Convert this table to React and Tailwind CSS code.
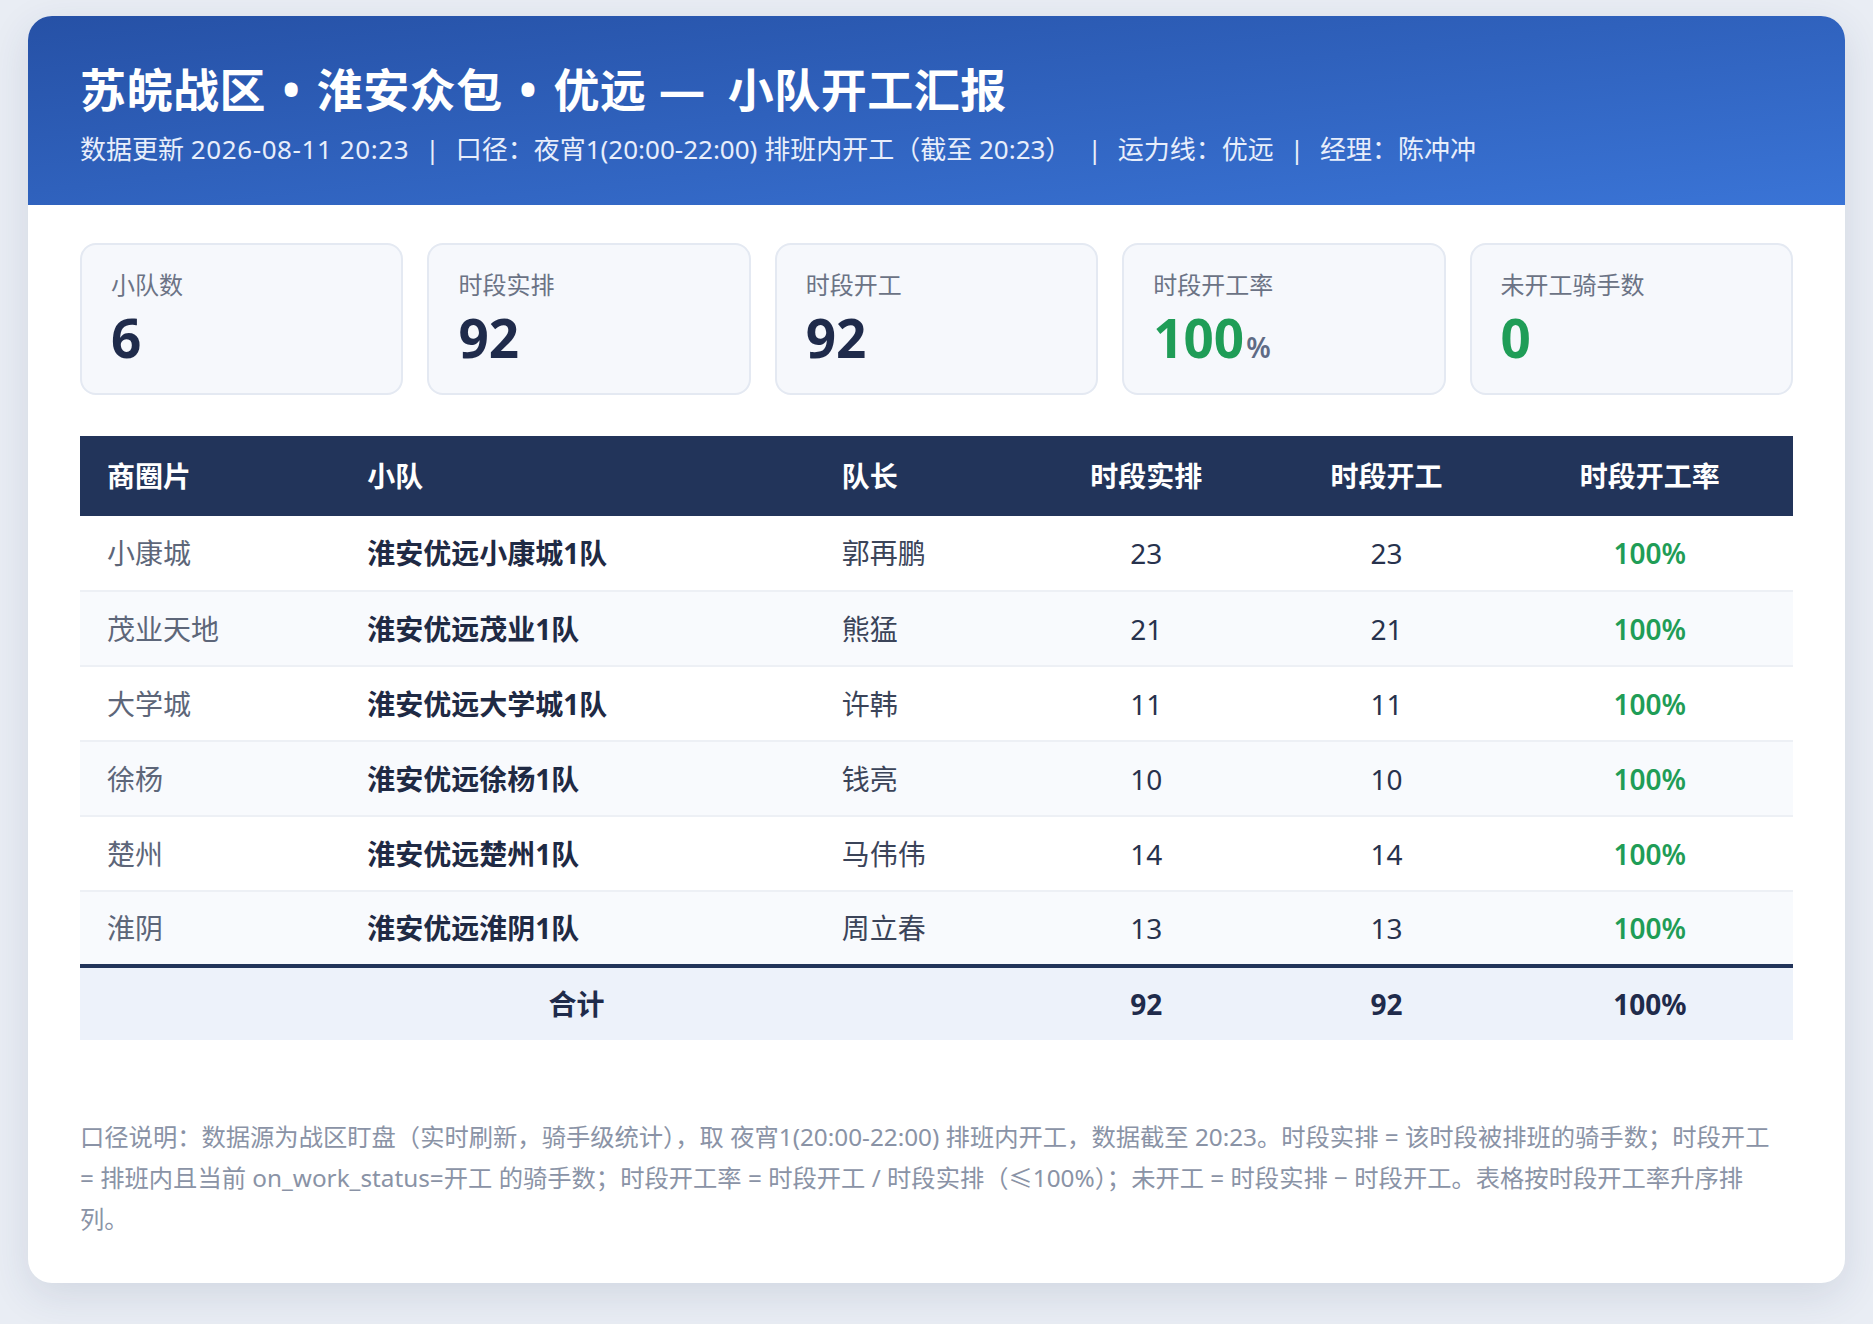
import React from 'react'

const stats = [
  { label: '小队数', value: '6', tone: 'navy' },
  { label: '时段实排', value: '92', tone: 'navy' },
  { label: '时段开工', value: '92', tone: 'navy' },
  { label: '时段开工率', value: '100', unit: '%', tone: 'green' },
  { label: '未开工骑手数', value: '0', tone: 'green' },
]

const rows = [
  { area: '小康城', team: '淮安优远小康城1队', leader: '郭再鹏', plan: 23, work: 23 },
  { area: '茂业天地', team: '淮安优远茂业1队', leader: '熊猛', plan: 21, work: 21 },
  { area: '大学城', team: '淮安优远大学城1队', leader: '许韩', plan: 11, work: 11 },
  { area: '徐杨', team: '淮安优远徐杨1队', leader: '钱亮', plan: 10, work: 10 },
  { area: '楚州', team: '淮安优远楚州1队', leader: '马伟伟', plan: 14, work: 14 },
  { area: '淮阴', team: '淮安优远淮阴1队', leader: '周立春', plan: 13, work: 13 },
]

function Sep() {
  return <span className="mx-[16px] text-white/90">|</span>
}

function StatCard({ label, value, unit, tone }) {
  return (
    <div className="rounded-[16px] border-2 border-[#e4e9f2] bg-[#f6f8fc] px-[29px] pt-[24px] pb-[17px]">
      <div className="text-[24px] leading-[31px] text-[#6b7385]">{label}</div>
      <div className={`mt-[9px] text-[53px] font-bold leading-[58px] ${tone === 'green' ? 'text-[#1f9d57]' : 'text-[#1f2b4b]'}`}>
        {value}
        {unit && <span className="ml-[2px] text-[28px] font-semibold text-[#5f6b85]">{unit}</span>}
      </div>
    </div>
  )
}

export default function App() {
  return (
    <div className="min-h-screen bg-[#e9edf4] px-[28px] pt-[16px] pb-[42px] font-['Noto_Sans','Noto_Sans_CJK_SC',sans-serif]">
      <div className="overflow-hidden rounded-[24px] bg-white shadow-[0_12px_40px_rgba(40,60,100,0.12)]">
        {/* header */}
        <div className="bg-gradient-to-br from-[#2651a6] to-[#3a74d6] px-[52px] pt-[46px] pb-[38px] text-white">
          <h1 className="text-[46px] font-bold leading-[55px] tracking-[0.5px]">
            苏皖战区 <span className="mx-[4px]">•</span> 淮安众包 <span className="mx-[4px]">•</span> 优远 <span className="mr-[10px]">—</span> 小队开工汇报
          </h1>
          <div className="mt-[14px] text-[26px] leading-[36px] text-[#e8eefb]">
            数据更新 <span className="tracking-[0.6px]">2026-08-11 20:23</span><Sep />口径：夜宵1(20:00-22:00) 排班内开工（截至 20:23）<Sep />运力线：优远<Sep />经理：陈冲冲
          </div>
        </div>

        <div className="px-[52px] pt-[38px] pb-[44px]">
          {/* stat cards */}
          <div className="grid grid-cols-5 gap-[24px]">
            {stats.map((s) => (
              <StatCard key={s.label} {...s} />
            ))}
          </div>

          {/* table */}
          <table className="mt-[41px] w-full table-fixed border-collapse text-[28px]">
            <colgroup>
              <col className="w-[260px]" />
              <col className="w-[474px]" />
              <col className="w-[211px]" />
              <col className="w-[240px]" />
              <col className="w-[240px]" />
              <col className="w-[286px]" />
            </colgroup>
            <thead>
              <tr className="h-[80px] bg-[#22345a] text-white">
                <th className="px-[27px] text-left font-bold">商圈片</th>
                <th className="px-[27px] text-left font-bold">小队</th>
                <th className="px-[27px] text-left font-bold">队长</th>
                <th className="px-[27px] text-center font-bold">时段实排</th>
                <th className="px-[27px] text-center font-bold">时段开工</th>
                <th className="px-[27px] text-center font-bold">时段开工率</th>
              </tr>
            </thead>
            <tbody>
              {rows.map((r, i) => (
                <tr key={r.team} className={`h-[75px] border-b-2 border-[#edf0f5] ${i % 2 === 1 ? 'bg-[#f8fafd]' : 'bg-white'}`}>
                  <td className="px-[27px] text-[#5d6679]">{r.area}</td>
                  <td className="px-[27px] font-bold text-[#1f2a44]">{r.team}</td>
                  <td className="px-[27px] text-[#3b4459]">{r.leader}</td>
                  <td className="px-[27px] text-center text-[#27324d]">{r.plan}</td>
                  <td className="px-[27px] text-center text-[#27324d]">{r.work}</td>
                  <td className="px-[27px] text-center font-semibold text-[#1f9d57]">100%</td>
                </tr>
              ))}
            </tbody>
            <tfoot>
              <tr className="h-[74px] border-t-[4px] border-[#22345a] bg-[#edf2fa] font-bold text-[#1f2b4b]">
                <td colSpan={3} className="pl-[74px] pr-[27px] text-center">合计</td>
                <td className="px-[27px] text-center">92</td>
                <td className="px-[27px] text-center">92</td>
                <td className="px-[27px] text-center">100%</td>
              </tr>
            </tfoot>
          </table>

          {/* note */}
          <p className="mt-[76px] max-w-[1698px] text-[24.3px] leading-[41px] text-[#8a93a6]">
            口径说明：数据源为战区盯盘（实时刷新，骑手级统计），取 夜宵1(20:00-22:00) 排班内开工，数据截至 20:23。时段实排 = 该时段被排班的骑手数；时段开工 = 排班内且当前 on_work_status=开工 的骑手数；时段开工率 = 时段开工 / 时段实排（≤100%）；未开工 = 时段实排 − 时段开工。表格按时段开工率升序排列。
          </p>
        </div>
      </div>
    </div>
  )
}
